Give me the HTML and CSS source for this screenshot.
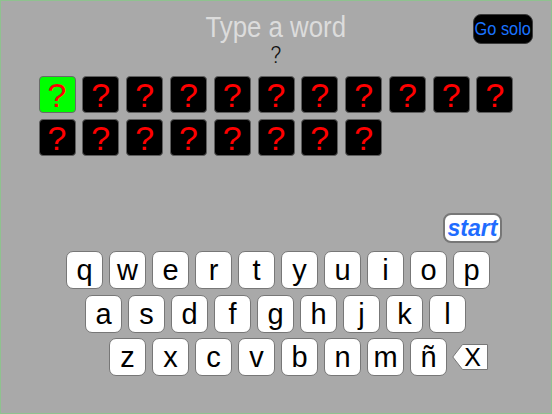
FILE: index.html
```html
<!DOCTYPE html>
<html lang="en">
<head>
    <meta charset="UTF-8">
    <meta name="viewport" content="width=device-width, initial-scale=1.0">
    <title>Type a word</title>
    <link rel="stylesheet" href="styles.css">
</head>
<body>
    <div class="screen">
        <header class="top">
            <h1 class="title"><span>Type a word</span></h1>
            <button class="btn-solo"><span>Go solo</span></button>
            <div class="hint">?</div>
        </header>

        <div class="tiles" id="tiles">
            <!-- tiles are added here -->
        </div>

        <div class="start-row">
            <button class="btn-start">start</button>
        </div>

        <div class="keyboard">
            <div class="key-row row-1" data-keys="qwertyuiop"></div>
            <div class="key-row row-2" data-keys="asdfghjkl"></div>
            <div class="key-row row-3" data-keys="zxcvbnmñ">
                <!-- backspace goes after the letters -->
            </div>
        </div>
    </div>

    <script>
        // Build the word tiles
        const tiles = document.getElementById('tiles');
        for (let i = 0; i < 19; i++) {
            const tile = document.createElement('div');
            tile.classList.add('tile');
            if (i === 0) tile.classList.add('tile-current');
            tile.textContent = '?';
            tiles.appendChild(tile);
        }

        // Build the keyboard rows
        document.querySelectorAll('.key-row').forEach((row) => {
            row.dataset.keys.split('').forEach((letter) => {
                const key = document.createElement('button');
                key.classList.add('key');
                key.textContent = letter;
                row.appendChild(key);
            });
        });

        // Backspace key
        const lastRow = document.querySelector('.row-3');
        const back = document.createElement('button');
        back.classList.add('key-back');
        back.innerHTML = `
            <svg width="36" height="26" viewBox="0 0 36 26">
                <polygon points="0.8,13 10.5,0.5 35.5,0.5 35.5,25.5 10.5,25.5" fill="#fff" stroke="#777" stroke-width="1"/>
                <text x="20.5" y="22" text-anchor="middle" font-family="Liberation Sans, Arial, sans-serif" font-size="25" fill="#000">X</text>
            </svg>
        `;
        lastRow.appendChild(back);
    </script>
</body>
</html>
```

FILE: styles.css
```css
html, body {
    margin: 0;
    padding: 0;
}

body {
    font-family: "Liberation Sans", Arial, sans-serif;
    background: #a9a9a9;
}

.screen {
    width: 552px;
    height: 414px;
    box-sizing: border-box;
    border: 1px solid #8fc28f;
    background: #a9a9a9;
    overflow: hidden;
}

.top {
    display: grid;
    grid-template-columns: 1fr auto 1fr;
    padding-top: 11px;
}

.title {
    grid-column: 2;
    grid-row: 1;
    margin: 0;
    font-size: 30px;
    line-height: 30px;
    font-weight: normal;
    color: #dcdcdc;
    text-align: center;
}

.title span {
    display: inline-block;
    transform: scaleX(0.86);
}

.hint {
    grid-column: 2;
    grid-row: 2;
    margin-top: 1px;
    font-family: Roboto, "Liberation Sans", sans-serif;
    font-weight: 300;
    font-size: 24px;
    line-height: 24px;
    color: #111;
    text-align: center;
}

.btn-solo {
    grid-column: 3;
    grid-row: 1 / span 2;
    justify-self: end;
    align-self: start;
    display: flex;
    align-items: center;
    justify-content: center;
    margin: 2px 18px 0 0;
    width: 60px;
    height: 30px;
    padding: 0;
    box-sizing: border-box;
    border: 1px solid #3a3a3a;
    border-radius: 8px;
    background: #000;
    color: #1a73ff;
    font-family: "Liberation Sans", Arial, sans-serif;
    font-size: 19px;
    cursor: pointer;
}

.btn-solo span {
    flex: none;
    transform: scaleX(0.86);
    white-space: nowrap;
}

.tiles {
    display: grid;
    grid-template-columns: repeat(11, 37px);
    grid-auto-rows: 37px;
    column-gap: 6.8px;
    row-gap: 6px;
    justify-content: center;
    margin-top: 9px;
}

.tile {
    box-sizing: border-box;
    background: #000;
    border: 1px solid #5e5e5e;
    border-radius: 4px;
    color: #ff0000;
    font-size: 34px;
    line-height: 37px;
    text-align: center;
}

.tile-current {
    background: #00ff00;
    border-color: #6a6a6a;
}

.start-row {
    display: flex;
    justify-content: flex-end;
    padding-right: 49px;
    margin-top: 57px;
}

.btn-start {
    width: 59px;
    height: 30px;
    padding: 0 0 2px;
    box-sizing: border-box;
    background: #fff;
    border: 2px solid #777;
    border-radius: 8px;
    color: #1f6cff;
    font-family: "Liberation Sans", Arial, sans-serif;
    font-size: 23px;
    font-weight: bold;
    font-style: italic;
    cursor: pointer;
}

.keyboard {
    display: flex;
    flex-direction: column;
    gap: 6px;
    margin-top: 8px;
}

.key-row {
    display: flex;
    gap: 6px;
}

.row-1 {
    padding-left: 65px;
}

.row-2 {
    padding-left: 84px;
    margin-bottom: -1px;
}

.row-3 {
    padding-left: 108px;
}

.key {
    width: 37px;
    height: 38px;
    box-sizing: border-box;
    padding: 0;
    background: #fff;
    border: 1px solid #777;
    border-radius: 7px;
    color: #000;
    font-family: "Liberation Sans", Arial, sans-serif;
    font-size: 29px;
    line-height: 36px;
    cursor: pointer;
}

.key-back {
    align-self: center;
    margin-left: -1px;
    padding: 0;
    border: none;
    background: none;
    line-height: 0;
    cursor: pointer;
}
```
